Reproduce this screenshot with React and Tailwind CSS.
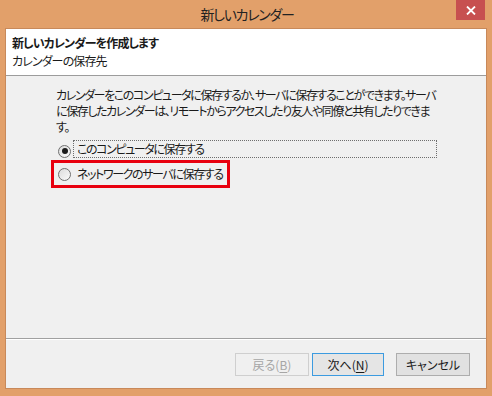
import React from "react";

const font = "font-['Noto_Sans_CJK_JP','Noto_Sans',sans-serif] [font-feature-settings:'palt']";

function Radio({ checked }) {
  return (
    <span className="relative inline-flex h-[13px] w-[13px] shrink-0 items-center justify-center rounded-full border border-[#707070] bg-gradient-to-br from-[#dcdcdc] to-[#fafafa]">
      {checked && <span className="h-[6px] w-[6px] rounded-full bg-[#1a1a1a]" />}
    </span>
  );
}

export default function App() {
  return (
    <div className={`w-[492px] h-[396px] bg-[#E2A06A] ${font} text-[12px] text-[#1a1a1a] flex flex-col`}>
      {/* Title bar */}
      <div className="relative h-[28px] flex items-center justify-center">
        <span className="text-[14px] tracking-[-1.3px] text-[#222] leading-none pb-[1px] pl-[2px]">新しいカレンダー</span>
        <div className="absolute right-[7px] top-0 h-[20px] w-[29px] bg-[#C75050] flex items-center justify-center">
          <svg width="10" height="9" viewBox="0 0 10 9">
            <path d="M1 0.5 L9 8.5 M9 0.5 L1 8.5" stroke="#fff" strokeWidth="1.8" />
          </svg>
        </div>
      </div>

      {/* Client */}
      <div className="mx-[5px] h-[361px] border border-[#C8895A] bg-[#F0F0F0] flex flex-col">
        {/* Header */}
        <div className="h-[47px] bg-white border-b border-[#9C9C9C] pt-[5px] pl-[6px] tracking-[-0.9px]">
          <div className="leading-[18px] font-bold">新しいカレンダーを作成します</div>
          <div className="leading-[18px]">カレンダーの保存先</div>
        </div>

        {/* Body */}
        <div className="h-[262px] pt-[11px] pl-[50px] tracking-[-1.4px]">
          <div className="leading-[16px]">
            <div className="whitespace-nowrap">カレンダーをこのコンピュータに保存するか、サーバに保存することができます。サーバ</div>
            <div className="whitespace-nowrap">に保存したカレンダーは、リモートからアクセスしたり友人や同僚と共有したりできま</div>
            <div className="whitespace-nowrap">す。</div>
          </div>

          <div className="mt-[5px] h-[18px] flex items-center">
            <span className="ml-[2px]"><Radio checked /></span>
            <div className="ml-[2px] h-[18px] w-[364px] border border-dotted border-[#6e6e6e] pl-[3px] flex items-center leading-none whitespace-nowrap">
              このコンピュータに保存する
            </div>
          </div>

          <div className="mt-[2px] -ml-[5px] h-[28px] w-[179px] border-[3px] border-[#E8000F] flex items-center pl-[4px]">
            <Radio />
            <span className="ml-[6px] leading-none whitespace-nowrap">ネットワークのサーバに保存する</span>
          </div>
        </div>

        {/* Footer */}
        <div className="flex-1 border-t border-[#A0A0A0]">
          <div className="h-full border-t border-white flex justify-end items-start pt-[13px] pr-[16px]">
            <div className="h-[23px] w-[74px] border border-[#CFCFCF] bg-[#F0F0F0] text-[#A6A6A6] flex items-center justify-center leading-none">
              戻る(<span className="underline underline-offset-2">B</span>)
            </div>
            <div className="ml-[3px] h-[23px] w-[72px] border border-[#3C9BE0] bg-[#E5E5E5] flex items-center justify-center leading-none">
              次へ(<span className="underline underline-offset-2">N</span>)
            </div>
            <div className="ml-[12px] h-[23px] w-[74px] border border-[#ADADAD] bg-[#E1E1E1] flex items-center justify-center leading-none">
              キャンセル
            </div>
          </div>
        </div>
      </div>
    </div>
  );
}
